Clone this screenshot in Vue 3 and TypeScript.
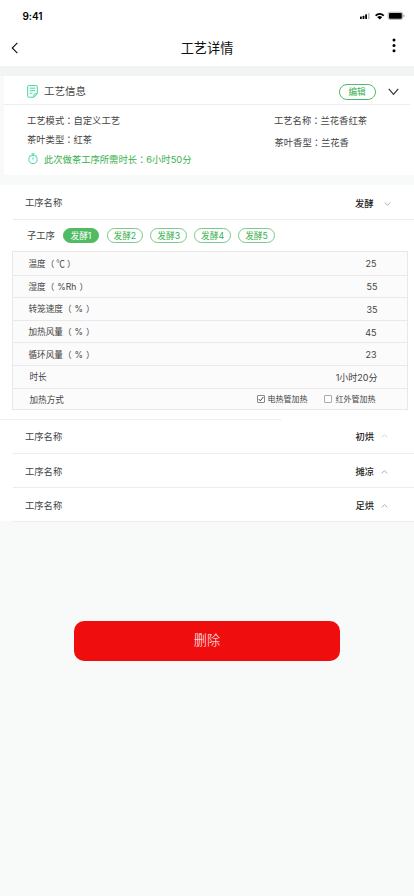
<script setup lang="ts">
import { ref } from 'vue'

interface Param {
  label: string
  unit?: string
  value: string
  shift?: string
}

const subSteps: string[] = ['1', '2', '3', '4', '5']
const activeStep = ref(0)

const params: Param[] = [
  { label: '温度', unit: '℃', value: '25', shift: 'out' },
  { label: '湿度', unit: '%Rh', value: '55' },
  { label: '转笼速度', unit: '%', value: '35' },
  { label: '加热风量', unit: '%', value: '45', shift: 'out' },
  { label: '循环风量', unit: '%', value: '23', shift: 'out' },
  { label: '时长', value: '1小时20分' },
]

const electric = ref(true)
const infrared = ref(false)

const otherSteps = [
  { name: '初烘', faint: true },
  { name: '摊凉', faint: false },
  { name: '足烘', faint: false },
]
</script>

<template>
  <div class="page">
    <header class="top">
      <div class="status">
        <span class="time">9:41</span>
        <svg class="signals" width="46" height="10" viewBox="0 0 46 10">
          <rect x="1" y="5.6" width="1.8" height="2.4" rx=".5" />
          <rect x="3.6" y="4.7" width="1.8" height="3.3" rx=".5" />
          <rect x="6.2" y="3.3" width="1.8" height="4.7" rx=".5" />
          <rect x="9" y="2" width="1.6" height="6" rx=".5" opacity=".25" />
          <path d="M16 4.1Q20.7-.1 25.4 4.1L24.2 5.3Q20.7 2.2 17.2 5.3ZM18 6Q20.7 3.8 23.4 6L20.7 8.6Z" />
          <path d="M17.7 5.6Q20.7 3.1 23.7 5.6" fill="none" stroke="#fff" stroke-width=".5" />
          <rect x="29.2" y="1.2" width="14.4" height="7.2" rx="1.8" fill="none" stroke="#000" stroke-width=".6" opacity=".5" />
          <rect x="30" y="2" width="12.8" height="5.8" rx="1" />
          <rect x="44.4" y="3.6" width="1" height="2.4" rx=".5" opacity=".4" />
        </svg>
      </div>
      <nav class="nav">
        <svg class="back" width="8" height="12" viewBox="0 0 8 12"><path d="M6.4.8 1.2 6l5.2 5.2" /></svg>
        <h1>工艺详情</h1>
        <svg class="more" width="4" height="15" viewBox="0 0 4 15">
          <circle cx="2" cy="2" r="1.5" /><circle cx="2" cy="7.4" r="1.5" /><circle cx="2" cy="12.8" r="1.5" />
        </svg>
      </nav>
    </header>

    <section class="info">
      <div class="info-head">
        <svg class="doc" width="11" height="13" viewBox="0 0 11 13">
          <path d="M1.7.6h7.6q1 0 1 1v7.2L7 12.2H1.7q-1 0-1-1V1.6q0-1 1-1ZM10.2 8.8H8q-1 0-1 1v2.3M2.7 3.2h5.6M2.7 5.7h5.6M2.7 8.2h2.8" />
        </svg>
        <h2>工艺信息</h2>
        <button class="edit">编辑</button>
        <svg class="fold" width="11" height="8" viewBox="0 0 11 8"><path d="M.8.9 5.5 6.4 10.2.9" /></svg>
      </div>
      <div class="info-body">
        <div class="col-left">
          <p>工艺模式<i class="colon">：</i>自定义工艺</p>
          <p>茶叶类型<i class="colon">：</i>红茶</p>
        </div>
        <div class="col-right">
          <p>工艺名称<i class="colon">：</i>兰花香红茶</p>
          <p>茶叶香型<i class="colon">：</i>兰花香</p>
        </div>
      </div>
      <div class="duration">
        <svg width="10" height="12" viewBox="0 0 10 12">
          <circle cx="5" cy="6.5" r="4.1" /><path d="M3.3.8h3.4M5 1v1.3M5 4.2v2.5M8 2.5l.9.8M2 2.5l-.9.8" />
        </svg>
        <span>此次做茶工序所需时长<i class="colon">：</i>6小时50分</span>
      </div>
    </section>

    <section class="steps">
      <div class="step current">
        <span>工序名称</span>
        <strong>发酵</strong>
        <svg width="7" height="4" viewBox="0 0 7 4"><path d="M.7.5 3.5 3.2 6.3.5" /></svg>
      </div>
      <div class="tabs">
        <span class="tabs-label">子工序</span>
        <button
          v-for="(s, i) in subSteps"
          :key="s"
          :class="{ active: i === activeStep }"
          @click="activeStep = i"
        >发酵{{ s }}</button>
      </div>
      <div class="table">
        <div v-for="p in params" :key="p.label" class="row">
          <span>{{ p.label }}<template v-if="p.unit">（<i class="unit" :class="{ degree: p.unit === '℃' }">{{ p.unit }}</i>）</template></span>
          <span class="value" :class="p.shift">{{ p.value }}</span>
        </div>
        <div class="row heat">
          <span>加热方式</span>
          <div class="checks">
            <label @click="electric = !electric">
              <span class="box" :class="{ on: electric }">
                <svg v-if="electric" width="6" height="6" viewBox="0 0 6 6"><path d="M.7 3 2.3 4.8 5.4.9" /></svg>
              </span>电热管加热
            </label>
            <label class="second" @click="infrared = !infrared">
              <span class="box">
                <svg v-if="infrared" width="6" height="6" viewBox="0 0 6 6"><path d="M.7 3 2.3 4.8 5.4.9" /></svg>
              </span>红外管加热
            </label>
          </div>
        </div>
      </div>
      <div class="divider"></div>
      <div v-for="s in otherSteps" :key="s.name" class="step other" :class="{ faint: s.faint }">
        <span>工序名称</span>
        <strong>{{ s.name }}</strong>
        <svg width="7" height="4" viewBox="0 0 7 4"><path d="M.7 3.4 3.5.7 6.3 3.4" /></svg>
      </div>
    </section>

    <button class="delete">删除</button>
  </div>
</template>

<style>
body {
  margin: 0;
  background: #f8faf9;
}
</style>

<style scoped>
.page {
  width: 414px;
  height: 896px;
  overflow: hidden;
  box-sizing: border-box;
  background: linear-gradient(#f2f4f4 76px, #f8faf9 76px);
  font-family: Inter, "Noto Sans CJK SC", sans-serif;
  font-weight: 400;
  font-size: 9.3px;
  color: #444;
}
h1, h2, p { margin: 0; font-weight: inherit; }
i { font-style: normal; }
svg { display: block; flex: none; overflow: visible; }
button {
  font: inherit;
  padding: 0;
  box-sizing: border-box;
  cursor: pointer;
}
.top { height: 66px; background: #fff; }
.status {
  display: flex;
  justify-content: space-between;
  align-items: center;
  height: 31px;
  padding: 0 9px 0 22.5px;
}
.time { font: 600 10px/12px Inter, sans-serif; color: #000; letter-spacing: -.1px; }
.signals { margin-top: 1px; }
.nav {
  display: flex;
  align-items: center;
  height: 33px;
  padding: 0 18px 0 11px;
}
.back path { fill: none; stroke: #111; stroke-width: 1.1; }
h1 {
  flex: 1;
  text-align: center;
  font-size: 13.2px;
  line-height: 20px;
  color: #111;
  padding-left: 3px;
}
.more { margin-top: -4px; }

.info {
  height: 98.5px;
  margin: 10px 0 10.5px 4px;
  background: #fff;
}
.info-head {
  display: flex;
  align-items: center;
  height: 27px;
  margin-right: 4px;
  padding: 1px 11px 0 23px;
  border-bottom: 1px solid #eee;
}
.doc path { fill: none; stroke: #45d79c; stroke-width: 1; }
.info-head .doc { margin-top: 2px; }
h2 { flex: 1; margin-left: 6px; font-size: 10.5px; line-height: 20px; padding-top: 3px; }
.edit {
  width: 37px;
  height: 16px;
  margin-top: 2px;
  border: 1px solid #50bb68;
  border-radius: 8px;
  background: #fff;
  color: #36b04b;
  font-size: 8.6px;
  line-height: 14px;
}
.fold { margin: 2px 0 0 12.5px; }
.fold path { fill: none; stroke: #333; stroke-width: 1.2; }
.info-body { display: flex; height: 45px; line-height: 14px; }
.col-left { width: 247.5px; padding: 8px 0 0 23px; box-sizing: border-box; }
.col-left p + p { margin-top: 4px; }
.col-right { padding: 8px 0 0 22.5px; }
.col-right p + p { margin: 7px 0 0 .5px; }
.colon { font-family: "Noto Sans CJK TC", sans-serif; }
.duration {
  display: flex;
  align-items: center;
  gap: 6px;
  padding: 2px 0 0 24px;
  line-height: 14px;
  color: #36b04b;
}
.duration svg { margin-top: -2px; }
.duration svg circle, .duration svg path { fill: none; stroke: #45d7b0; stroke-width: 1; }

.steps {
  height: 336px;
  background: #fff;
}
.step {
  display: flex;
  align-items: center;
  height: 33px;
  padding: 0 23.5px 1px 25px;
  background: linear-gradient(#ececec, #ececec) 13px 100% / 401px 1px no-repeat;
}
.step span { flex: 1; line-height: 14px; padding-top: 1px; }
.step strong { font-weight: 500; color: #222; line-height: 14px; }
.step svg { margin-left: 10px; }
.step path { fill: none; stroke: #999; stroke-width: .8; }
.step.other { padding-right: 26px; }
.step.other span, .step.other strong { padding-top: 2px; }
.step.other svg { margin: 2px 0 0 7px; }
.step.faint path { stroke: #ccc; }
.step.faint svg { margin-top: 0; }
.current { height: 34px; }
.current strong { margin-top: 4px; }
.current svg { margin-top: 3px; }
.tabs {
  display: flex;
  align-items: center;
  height: 31px;
  padding-left: 27px;
}
.tabs-label { width: 35.7px; line-height: 14px; padding-top: 1px; }
.tabs button {
  width: 36.5px;
  height: 15.5px;
  margin-right: 7.4px;
  border: 1px solid #7aca8a;
  border-radius: 8px;
  background: #fff;
  color: #36b04b;
  font-size: 8.7px;
  line-height: 14px;
}
.tabs button.active { background: #50bb62; border-color: #50bb62; color: #fff; }
.table {
  width: 396px;
  height: 159px;
  margin-left: 11.5px;
  box-sizing: border-box;
  border: 1px solid #e8e8e8;
  background: #fbfbfb;
}
.row {
  display: flex;
  justify-content: space-between;
  align-items: center;
  height: 22.67px;
  box-sizing: border-box;
  padding: 0 29px 1px 16px;
  border-bottom: 1px solid #e9e9e9;
  font-size: 8.6px;
}
.row:first-child { height: 23.5px; }
.row:nth-child(n + 6) { padding-left: 17px; }
.row:last-child { border: 0; height: 20.5px; padding-right: 31px; }
.unit { margin: 0 3px; }
.unit.degree { margin: 0 2px; font-family: "Noto Sans CJK SC", sans-serif; }
.value { font-size: 9px; padding-top: 2px; }
.value.out { margin-right: 1px; }
.checks { display: flex; gap: 16px; font-size: 8px; }
.checks label { display: flex; align-items: center; gap: 3px; }
.checks .second { gap: 4px; }
.box {
  display: flex;
  align-items: center;
  justify-content: center;
  width: 6px;
  height: 6px;
  border: 1px solid #aaa;
  border-radius: 1px;
  background: #fff;
}
.box.on { border-color: #888; }
.box path { fill: none; stroke: #333; stroke-width: .9; }
.divider { width: 282px; height: 1px; margin-top: 8.5px; background: #f1f1f1; }
.divider + .step { height: 33.5px; }

.delete {
  display: block;
  width: 266px;
  height: 40px;
  margin: 100px 0 0 74px;
  padding-bottom: 2px;
  border: 0;
  border-radius: 10px;
  background: #f00d0d;
  color: #fff;
  font-weight: 300;
  font-size: 13.2px;
  line-height: 38px;
}
</style>
